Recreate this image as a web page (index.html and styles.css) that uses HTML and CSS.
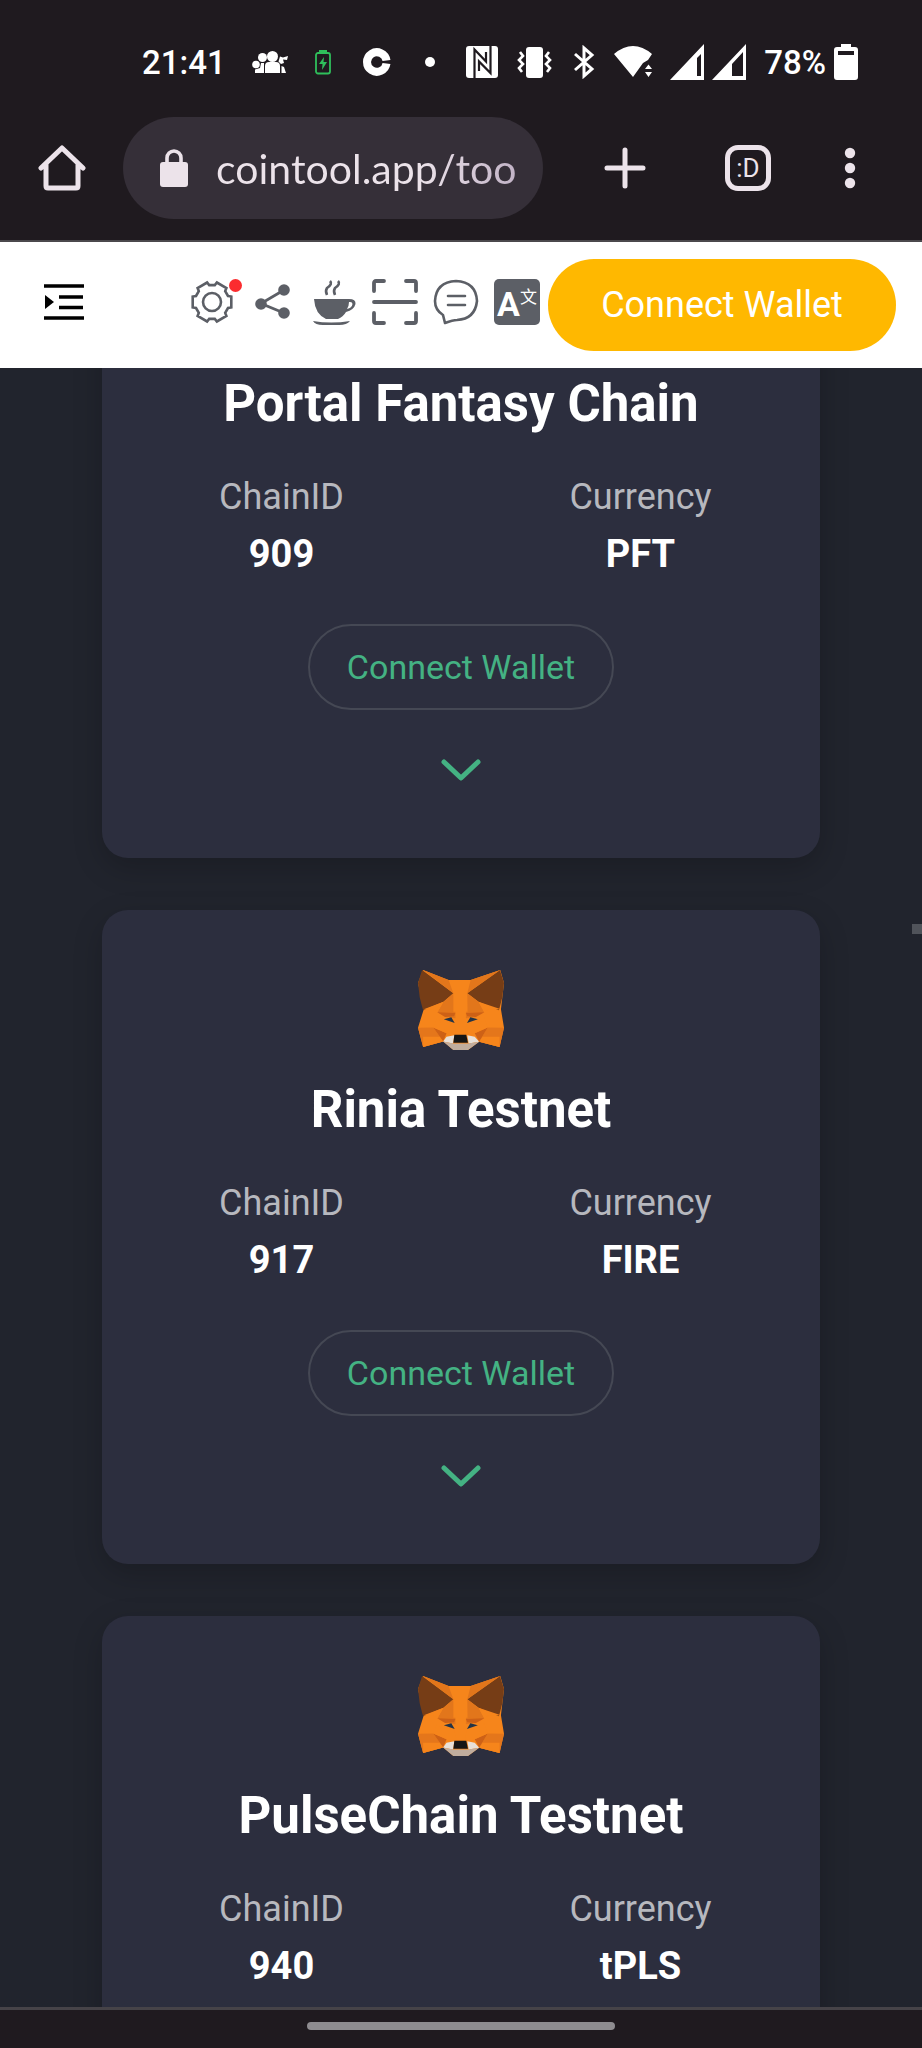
FILE: index.html
```
<!DOCTYPE html>
<html lang="en">

<head>
  <meta charset="UTF-8" />
  <meta name="viewport" content="width=device-width, initial-scale=1.0" />
  <title>CoinTool</title>
  <link rel="stylesheet" href="styles.css">
</head>

<body>
  <!-- shared symbols -->
  <svg class="symbols" aria-hidden="true">
    <symbol id="fox" viewBox="0 0 253 235">
      <path fill="#f6851b" d="M15 0 90 29H155L242 0 253 38 244 115 253 170 240 226 180 211 147 235H104L74 210 15 226 0 170 17 115 0 38Z" />
      <path fill="#763d16" d="M12 0 104 68 75 93 15 118 10 100 5 80 0 38ZM241 0 145 68 178 93 238 118 243 100 248 80 253 38Z" />
      <path fill="#e2761b" d="M15 0 90 29 104 68ZM242 0 155 29 145 68ZM104 68 75 93 57 124 108 138 112 105ZM145 68 178 93 195 124 141 138 137 105Z" />
      <path fill="#f6851b" d="M75 93 17 115 45 117 57 124ZM178 93 244 115 205 117 195 124ZM104 68 104 137 112 190H138L146 137 145 68 130 85H118Z" />
      <path fill="#e4761b" d="M0 170 45 169 74 210 15 226ZM253 170 205 169 180 211 240 226ZM57 124 110 123 110 142 80 138ZM195 124 141 123 141 142 170 138Z" />
      <path fill="#cd6116" d="M45 169 84 186 74 210ZM205 169 167 186 180 211ZM57 124 80 138 106 136 110 126ZM195 124 170 138 145 136 141 126Z" />
      <path fill="#f6851b" d="M57 138 84 186 45 169ZM195 138 167 186 205 169ZM15 196 64 196 74 210 15 226ZM240 196 190 196 180 211 240 226Z" />
      <path fill="#233447" d="M76 145 98 139 108 156ZM176 145 154 139 144 156Z" />
      <path fill="#e8e0d8" d="M74 210 84 196 107 192 103 216ZM180 211 167 196 145 192 149 216Z" />
      <path fill="#c0ad9e" d="M74 210 103 216H149L180 211 147 235H104Z" />
      <path fill="#161616" d="M107 190H142L147 214H104Z" />
    </symbol>
    <symbol id="chevron" viewBox="0 0 40 24">
      <path d="M3 4 20 20 37 4" fill="none" stroke="#44b283" stroke-width="5" stroke-linecap="round" stroke-linejoin="round" />
    </symbol>
  </svg>

  <div class="status-bar">
    <div class="status-left">
      <span class="time">21:41</span>
      <svg width="36" height="24" viewBox="0 0 36 24" fill="#fff">
        <path d="M13 23V16Q13 12 17 12H24Q28 12 28 16V23Z" />
        <circle cx="20.500" cy="6.500" r="5.500" />
        <circle cx="10.500" cy="7.500" r="4.500" />
        <circle cx="4" cy="14.500" r="3.800" />
        <path d="M3 23V19.500L8 18 9 13H12V23ZM29.500 23V16L32 17 34 23ZM28 6.500 31 7.500 36 6 35 10 31 9.500 32 13 29 14 26.500 11.500Z" />
      </svg>
      <svg width="18" height="26" viewBox="0 0 18 26">
        <rect x="2" y="4" width="14" height="20.500" rx="2" fill="none" stroke="#2fbf5b" stroke-width="1.800" />
        <path d="M5 1H13V4H5Z" fill="#2fbf5b" />
        <path d="M10 8 5 15H8.500L8 21 13 13H9.500Z" fill="#2fbf5b" />
      </svg>
      <svg width="38" height="30" viewBox="0 0 38 30">
        <path d="M28.500 13.500A9.800 9.800 0 1 0 28.500 16.500" fill="none" stroke="#fff" stroke-width="8" />
      </svg>
      <svg width="16" height="16" viewBox="0 0 16 16">
        <circle cx="8" cy="8" r="5" fill="#fff" />
      </svg>
    </div>
    <div class="status-right">
      <svg width="32" height="32" viewBox="0 0 32 32">
        <rect width="32" height="32" rx="3" fill="#fff" />
        <path d="M8.500 32V3.500L20 15.500V6M24.500 0V27L13 15.500V25" fill="none" stroke="#1f1a1f" stroke-width="2.200" />
      </svg>
      <svg width="38" height="32" viewBox="0 0 38 32">
        <rect x="10" y="1" width="17" height="31" rx="3" fill="#fff" />
        <path d="M4 6 7 10 3 14 7 18 3 22 6 26M33 6 30 10 34 14 30 18 34 22 31 26" fill="none" stroke="#fff" stroke-width="2.600" />
      </svg>
      <svg width="24" height="34" viewBox="0 0 24 34">
        <path d="M3 9 20 24 12 31V3L20 10 3 25" fill="none" stroke="#fff" stroke-width="3" />
      </svg>
      <svg width="38" height="34" viewBox="0 0 38 34" fill="#fff">
        <path d="M0 9Q19-7 38 9L34 15 29 18 19 32Z" />
        <path d="M31 24 34.500 19.500 38 24ZM31 27H38L34.500 32Z" />
      </svg>
      <div class="signals">
        <svg width="34" height="36" viewBox="0 0 34 36">
          <path d="M34 0V36H0ZM31 10 27 14V32H31Z" fill="#fff" />
        </svg>
        <svg width="34" height="36" viewBox="0 0 34 36">
          <path d="M34 0V36H0ZM31 8 20 20V32H31Z" fill="#fff" />
        </svg>
      </div>
      <div class="battery">
        <span>78%</span>
        <svg width="24" height="36" viewBox="0 0 24 36">
          <path d="M7 0H17V3H21Q24 3 24 6V33Q24 36 21 36H3Q0 36 0 33V6Q0 3 3 3H7ZM4 7V11H20V7Z" fill="#fff" />
        </svg>
      </div>
    </div>
  </div>

  <div class="browser-bar">
    <button class="home" aria-label="Home">
      <svg width="48" height="48" viewBox="0 0 48 48">
        <path d="M3 24 24 4 45 24M8 20V42Q8 44 10 44H38Q40 44 40 42V20" fill="none" stroke="#ece3ea" stroke-width="5" stroke-linecap="round" stroke-linejoin="round" />
      </svg>
    </button>
    <label class="omnibox">
      <svg width="28" height="38" viewBox="0 0 28 38">
        <rect y="13" width="28" height="25" rx="3" fill="#ece3ea" />
        <path d="M7 14V9A7 7 0 0 1 21 9V14" fill="none" stroke="#ece3ea" stroke-width="3.600" />
      </svg>
      <input type="text" value="cointool.app/too" aria-label="Address">
    </label>
    <button class="new-tab" aria-label="New tab">
      <svg width="42" height="42" viewBox="0 0 42 42">
        <path d="M21 3V39M3 21H39" stroke="#ece3ea" stroke-width="5" stroke-linecap="round" />
      </svg>
    </button>
    <button class="tabs" aria-label="Tabs"><span>:D</span></button>
    <button class="more" aria-label="More">
      <svg width="12" height="42" viewBox="0 0 12 42" fill="#ece3ea">
        <circle cx="6" cy="6" r="5.200" />
        <circle cx="6" cy="21" r="5.200" />
        <circle cx="6" cy="36" r="5.200" />
      </svg>
    </button>
  </div>

  <header class="header">
    <button class="menu" aria-label="Menu">
      <svg width="40" height="36" viewBox="0 0 40 36">
        <path d="M0 2H40M15 13H39M15 23.500H39M0 34H40" stroke="#000" stroke-width="3.600" />
        <path d="M1 11 10 18 1 25Z" />
      </svg>
    </button>
    <nav class="tools">
      <button class="settings" aria-label="Settings">
        <svg viewBox="-23 -23 46 46" fill="none" stroke="#5c5f66" stroke-width="2.600">
          <path d="M16-6 19.300-5.500V5.500L16 6 13.200 10.900 14.400 14 4.900 19.500 2.800 16.900H-2.800L-4.900 19.500-14.400 14-13.200 10.900-16 6-19.300 5.500V-5.500L-16-6-13.200-10.900-14.400-14-4.900-19.500-2.800-16.900H2.800L4.900-19.500 14.400-14 13.200-10.900Z" />
          <circle r="9" />
        </svg>
        <span class="dot"></span>
      </button>
      <button aria-label="Share">
        <svg viewBox="0 0 46 46" fill="#5c5f66">
          <path d="M34 11 11 24.500 34 34" fill="none" stroke="#5c5f66" stroke-width="2.800" />
          <circle cx="34" cy="11" r="5.800" />
          <circle cx="11" cy="25" r="5.800" />
          <circle cx="34" cy="34" r="5.800" />
        </svg>
      </button>
      <button aria-label="Donate">
        <svg viewBox="0 0 46 46" fill="#5c5f66">
          <path d="M3 20H38Q45 20 44.500 25 43 31 35 33 32 38 27 40H15Q4 35 3 20ZM38 23Q38 27 36 30 41 29 41.500 25 41.500 22.500 38 23Z" fill-rule="evenodd" />
          <path d="M2 42Q20 45 39 42 36 46 28 46H12Q4 46 2 42Z" />
          <path d="M19 2Q22 5 16 9 14 12 16 16M27 2Q30 5 24 9 22 12 24 16" fill="none" stroke="#5c5f66" stroke-width="2.600" />
        </svg>
      </button>
      <button aria-label="Scan">
        <svg viewBox="0 0 46 46" fill="none" stroke="#5c5f66" stroke-width="3.800" stroke-linecap="round">
          <path d="M2 12V4Q2 2 4 2H12M34 2H42Q44 2 44 4V12M2 34V42Q2 44 4 44H12M34 44H42Q44 44 44 42V34M2 23H44" />
        </svg>
      </button>
      <button aria-label="Chat">
        <svg viewBox="0 0 46 46" fill="none" stroke="#5c5f66" stroke-width="2.600" stroke-linecap="round" stroke-linejoin="round">
          <path d="M12 44 10 36Q2 31 2 22 3 3 23 2 43 3 44 22 42 40 24 41 20 41 12 44ZM15 17H32M15 26H32" />
        </svg>
      </button>
      <button class="translate" aria-label="Language"><b>A</b><span lang="zh">文</span></button>
    </nav>
    <button class="wallet">Connect Wallet</button>
  </header>

  <main class="chains">
    <div class="chain-list">
      <section class="card">
        <svg class="logo"><use href="#fox" /></svg>
        <h2>Portal Fantasy Chain</h2>
        <dl>
          <div><dt>ChainID</dt><dd>909</dd></div>
          <div><dt>Currency</dt><dd>PFT</dd></div>
        </dl>
        <button class="connect">Connect Wallet</button>
        <button class="expand" aria-label="Show details"><svg><use href="#chevron" /></svg></button>
      </section>

      <section class="card">
        <svg class="logo"><use href="#fox" /></svg>
        <h2>Rinia Testnet</h2>
        <dl>
          <div><dt>ChainID</dt><dd>917</dd></div>
          <div><dt>Currency</dt><dd>FIRE</dd></div>
        </dl>
        <button class="connect">Connect Wallet</button>
        <button class="expand" aria-label="Show details"><svg><use href="#chevron" /></svg></button>
      </section>

      <section class="card">
        <svg class="logo"><use href="#fox" /></svg>
        <h2>PulseChain Testnet</h2>
        <dl>
          <div><dt>ChainID</dt><dd>940</dd></div>
          <div><dt>Currency</dt><dd>tPLS</dd></div>
        </dl>
      </section>
    </div>
    <div class="scroll-thumb"></div>
  </main>

  <footer class="nav-bar">
    <div class="handle"></div>
  </footer>
</body>

</html>
```
FILE: styles.css
```
* {
  box-sizing: border-box;
}

body {
  margin: 0;
  height: 100vh;
  display: flex;
  flex-direction: column;
  overflow: hidden;
  font-family: Roboto, "Liberation Sans", sans-serif;
  background-color: #21242d;
}

button {
  margin: 0;
  padding: 0;
  border: none;
  background: none;
  font-family: inherit;
  cursor: pointer;
}

svg {
  display: block;
  flex-shrink: 0;
}

.symbols {
  display: none;
}

/* phone status bar */
.status-bar {
  display: flex;
  justify-content: space-between;
  align-items: center;
  height: 96px;
  padding: 28px 64px 0 142px;
  background-color: #1f1a1f;
  color: #fff;
  font-size: 33px;
  font-weight: 500;
}

.status-left {
  display: flex;
  align-items: center;
  gap: 26px;
}

.status-right {
  display: flex;
  align-items: center;
  gap: 18px;
}

.signals,
.battery {
  display: flex;
  align-items: center;
  gap: 8px;
}

/* browser toolbar */
.browser-bar {
  display: flex;
  align-items: center;
  height: 146px;
  padding: 0 45px 0 38px;
  background-color: #1f1a1f;
  border-bottom: 2px solid #4b484c;
}

.browser-bar button {
  display: flex;
  justify-content: center;
  align-items: center;
  height: 48px;
}

.omnibox {
  flex: 1;
  min-width: 0;
  display: flex;
  align-items: center;
  gap: 28px;
  height: 102px;
  margin: 0 34px 0 37px;
  padding: 0 20px 0 37px;
  border-radius: 51px;
  background-color: #352f38;
}

.omnibox input {
  flex: 1;
  min-width: 0;
  padding: 0;
  border: none;
  outline: none;
  font-family: Lato, sans-serif;
  font-size: 41px;
  color: transparent;
  background: linear-gradient(90deg, #ece3ea 66%, #bfb0c4) text;
}

.new-tab {
  width: 96px;
}

.tabs {
  width: 150px;
}

.tabs span {
  width: 46px;
  height: 46px;
  border: 5px solid #ece3ea;
  border-radius: 13px;
  color: #ece3ea;
  font-size: 26px;
  line-height: 36px;
}

.more {
  width: 54px;
}

/* site header */
.header {
  display: flex;
  align-items: center;
  height: 126px;
  padding: 0 26px 0 44px;
  background-color: #fff;
}

.menu,
.tools {
  padding-bottom: 6px;
}

.tools {
  display: flex;
  gap: 15px;
  margin-left: auto;
  margin-right: 8px;
}

.tools button {
  position: relative;
  width: 46px;
  height: 46px;
}

.dot {
  position: absolute;
  top: 0;
  right: -7px;
  width: 13px;
  height: 13px;
  border-radius: 50%;
  background-color: #fb2c2f;
}

.tools .translate {
  display: flex;
  justify-content: center;
  border-radius: 5px;
  background-color: #5c5f66;
  color: #fff;
}

.translate b {
  font-size: 34px;
  line-height: 50px;
}

.translate span {
  font-family: "Noto Sans CJK SC", sans-serif;
  font-size: 17px;
  line-height: 34px;
}

.wallet {
  width: 348px;
  height: 92px;
  border-radius: 46px;
  background-color: #ffb800;
  color: #fff;
  font-size: 36px;
}

/* chain cards, scrolled part of the way down the first one */
.chains {
  position: relative;
  flex: 1;
  min-height: 0;
  overflow: hidden;
}

.chain-list {
  display: flex;
  flex-direction: column;
  gap: 52px;
  margin-top: -164px;
  padding: 0 102px;
}

.card {
  display: flex;
  flex-direction: column;
  align-items: center;
  padding: 60px 0 66px;
  border-radius: 26px;
  background-color: #2c2e3e;
  box-shadow: 0 10px 30px rgba(0, 0, 0, 0.2);
}

.logo {
  width: 86px;
  height: 80px;
}

.card h2 {
  margin: 30px 0 35px;
  color: #fff;
  font-size: 51px;
  line-height: 60px;
}

.card dl {
  display: grid;
  grid-template-columns: 1fr 1fr;
  width: 100%;
  margin: 0 0 41px;
  text-align: center;
}

.card dt {
  color: #b7b8be;
  font-size: 36px;
  line-height: 56px;
}

.card dd {
  margin: 0;
  color: #fff;
  font-size: 38px;
  font-weight: bold;
  line-height: 58px;
}

.connect {
  width: 306px;
  height: 86px;
  border: 2px solid #454854;
  border-radius: 43px;
  color: #44b283;
  font-size: 34px;
}

.expand {
  margin-top: 38px;
  padding: 10px;
}

.expand svg {
  width: 40px;
  height: 24px;
}

.scroll-thumb {
  position: absolute;
  top: 556px;
  right: 0;
  width: 10px;
  height: 10px;
  background-color: #50535a;
}

/* gesture bar */
.nav-bar {
  display: flex;
  justify-content: center;
  align-items: center;
  height: 41px;
  padding-bottom: 6px;
  background-color: #1f1a1f;
  border-top: 3px solid #464348;
}

.handle {
  width: 308px;
  height: 8px;
  border-radius: 4px;
  background-color: #8e8c90;
}
```
